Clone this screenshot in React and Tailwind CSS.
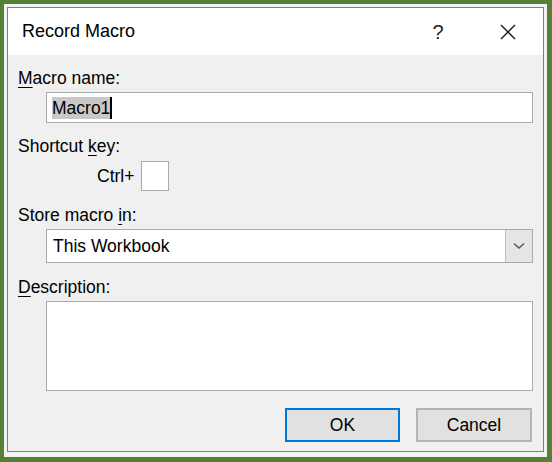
import React from "react";

const font = { fontFamily: '"Liberation Sans", Arial, sans-serif' };

function Label({ pre, u, post }) {
  return (
    <div className="h-[20px] leading-[20px] text-[17.5px] text-black pl-[10px]">
      {pre}
      <span className="underline underline-offset-[3px] decoration-[1px]">{u}</span>
      {post}
    </div>
  );
}

export default function App() {
  return (
    <div
      className="w-[552px] h-[462px] bg-[#538135] pt-[4px] pl-[4px] pr-[5px] pb-[5px]"
      style={font}
    >
      <div className="w-full h-full bg-[#f3f3f3] pt-[3px] pl-[3px] pr-[3px] pb-[5px]">
        <div className="w-full h-full border border-[#7f7f7f] bg-[#f0f0f0] flex flex-col">
          {/* Title bar */}
          <div className="h-[47px] bg-white flex items-center shrink-0">
            <div className="pl-[14px] text-[18px] text-black flex-1">Record Macro</div>
            <div className="w-[20px] text-center text-[20px] text-[#222] mr-[52px]">?</div>
            <svg width="16" height="16" viewBox="0 0 16 16" className="mr-[27px]">
              <path d="M1 1 L15 15 M15 1 L1 15" stroke="#1a1a1a" strokeWidth="1.4" fill="none" />
            </svg>
          </div>

          {/* Body */}
          <div className="flex flex-col flex-1">
            <div className="mt-[13px]">
              <Label u="M" post="acro name:" />
            </div>
            <div className="mt-[4px] ml-[38px] mr-[10px] h-[31px] bg-white border border-[#a9a9a9] flex items-center pl-[5px]">
              <span className="bg-[#c8c8c8] text-[17.5px] leading-[22px] text-black">Macro1</span>
              <span className="w-[1.5px] h-[22px] bg-black"></span>
            </div>

            <div className="mt-[13px]">
              <Label pre="Shortcut " u="k" post="ey:" />
            </div>
            <div className="mt-[5px] flex items-center pl-[89px]">
              <span className="text-[17.5px] text-black">Ctrl+</span>
              <div className="ml-[7px] w-[28px] h-[30px] bg-white border border-[#a9a9a9]"></div>
            </div>

            <div className="mt-[14px]">
              <Label pre="Store macro " u="i" post="n:" />
            </div>
            <div className="mt-[4px] ml-[38px] mr-[10px] h-[34px] bg-white border border-[#a9a9a9] flex items-stretch">
              <div className="flex-1 flex items-center pl-[6px] text-[17.5px] text-black">This Workbook</div>
              <div className="w-[27px] bg-[#e5e5e5] border-l border-[#bdbdbd] flex items-center justify-center">
                <svg width="12" height="8" viewBox="0 0 12 8">
                  <path d="M1 1.5 L6 6 L11 1.5" stroke="#555" strokeWidth="1.4" fill="none" />
                </svg>
              </div>
            </div>

            <div className="mt-[14px]">
              <Label u="D" post="escription:" />
            </div>
            <div className="mt-[4px] ml-[38px] mr-[10px] h-[90px] bg-white border border-[#a9a9a9]"></div>

            <div className="mt-[17px] flex justify-end pr-[11px] gap-[16px]">
              <button className="w-[115px] h-[34px] bg-[#e1e1e1] border-2 border-[#0078d7] text-[17.5px] text-black">
                OK
              </button>
              <button className="w-[116px] h-[34px] bg-[#e1e1e1] border-2 border-[#b4b4b4] text-[17.5px] text-black">
                Cancel
              </button>
            </div>
          </div>
        </div>
      </div>
    </div>
  );
}
